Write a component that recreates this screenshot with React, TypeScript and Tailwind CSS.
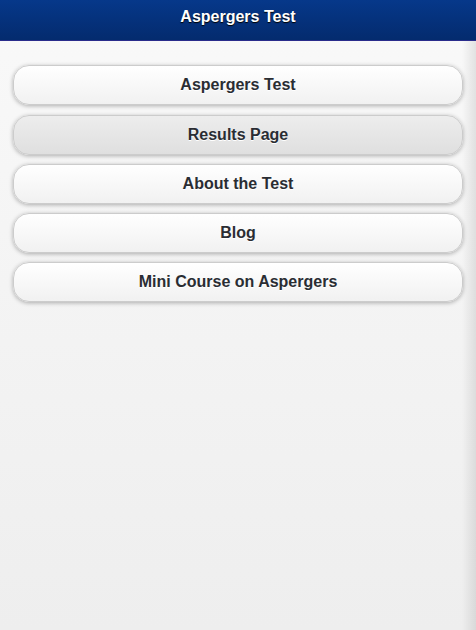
import React from 'react';

const links = [
  { label: 'Aspergers Test', active: false },
  { label: 'Results Page', active: true },
  { label: 'About the Test', active: false },
  { label: 'Blog', active: false },
  { label: 'Mini Course on Aspergers', active: false },
];

export default function App() {
  return (
    <div className="relative h-[630px] w-[476px] overflow-hidden bg-gradient-to-b from-[#f9f9f9] to-[#eeeeee] font-['Liberation_Sans',Arial,sans-serif]">
      {/* Header bar */}
      <div className="flex h-[41px] items-center justify-center border-b border-[#2a2c8c] bg-gradient-to-b from-[#06388a] to-[#042b6e]">
        <h1 className="-mt-[7px] text-[16px] font-bold text-white [text-shadow:0_1px_1px_#000]">
          Aspergers Test
        </h1>
      </div>

      {/* Nav buttons */}
      <div className="flex flex-col gap-[9px] px-[13px] pt-[24px]">
        {links.map((l, i) => (
          <a
            key={l.label}
            className={`flex h-[40px] items-center justify-center rounded-[16px] border border-[#cccccc] text-[16px] font-bold text-[#2a2d33] shadow-[0_1px_4px_rgba(0,0,0,0.3)] [text-shadow:0_1px_0_#fff] ${
              i === 0 ? 'mb-[1px]' : ''
            } ${
              l.active
                ? 'bg-gradient-to-b from-[#ededed] to-[#dfdfdf]'
                : 'bg-gradient-to-b from-[#ffffff] to-[#f1f1f1]'
            }`}
          >
            {l.label}
          </a>
        ))}
      </div>

      {/* right edge shading */}
      <div className="pointer-events-none absolute top-[41px] right-0 bottom-0 w-[14px] bg-gradient-to-r from-transparent to-[rgba(0,0,0,0.09)]" />
    </div>
  );
}
